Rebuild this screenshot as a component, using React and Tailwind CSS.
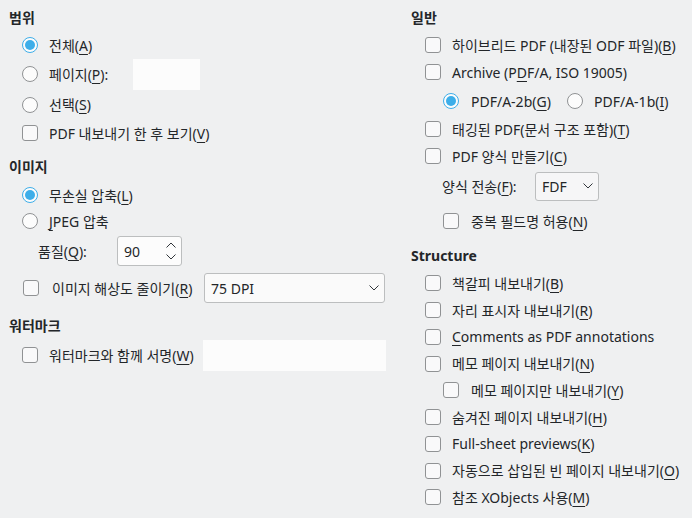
import React from 'react';

// mnemonic label: "&" marks the underlined letter
function Mn({ t }) {
    const i = t.indexOf('&');
    if (i < 0) return <>{t}</>;
    return (
        <>
            {t.slice(0, i)}
            <span className="underline decoration-1 underline-offset-[3px]">{t[i + 1]}</span>
            {t.slice(i + 2)}
        </>
    );
}

const Radio = ({ checked }) =>
    checked ? (
        <span className="w-4 h-4 shrink-0 rounded-full border border-[#3daee9] bg-[#fcfcfc] flex items-center justify-center">
            <span className="w-[10px] h-[10px] rounded-full bg-[#3daee9]" />
        </span>
    ) : (
        <span className="w-4 h-4 shrink-0 rounded-full border border-[#909294] bg-[#fcfcfc]" />
    );

const Check = () => <span className="w-4 h-4 shrink-0 rounded-[3px] border border-[#909294] bg-[#f9f9fa]" />;

const Header = ({ children, className = '' }) => (
    <div className={`h-[20px] flex items-center font-bold ${className}`}>{children}</div>
);

const ChevronDown = () => (
    <svg width="10" height="6" viewBox="0 0 10 6" className="shrink-0">
        <polyline points="0.5,0.5 5,5 9.5,0.5" fill="none" stroke="#31363b" strokeWidth="1" />
    </svg>
);

const SpinArrows = () => (
    <svg width="10" height="18" viewBox="0 0 10 18" className="shrink-0">
        <polyline points="0.5,5.5 5,1 9.5,5.5" fill="none" stroke="#31363b" strokeWidth="1" />
        <polyline points="0.5,12.5 5,17 9.5,12.5" fill="none" stroke="#31363b" strokeWidth="1" />
    </svg>
);

const structure = [
    ['책갈피 내보내기(&B)', false],
    ['자리 표시자 내보내기(&R)', false],
    ['&Comments as PDF annotations', false],
    ['메모 페이지 내보내기(&N)', false],
    ['메모 페이지만 내보내기(&Y)', true],
    ['숨겨진 페이지 내보내기(&H)', false],
    ['Full-sheet previews(&K)', false],
    ['자동으로 삽입된 빈 페이지 내보내기(&O)', false],
    ['참조 XObjects 사용(&M)', false],
];

export default function App() {
    return (
        <div className="w-[692px] h-[518px] bg-[#eff0f1] text-[#232629] text-[14px] font-['Noto_Sans','Noto_Sans_CJK_KR',sans-serif] flex overflow-hidden">
            {/* left column */}
            <div className="w-[401px] shrink-0 pt-[7px] flex flex-col">
                <Header className="pl-[9px]">범위</Header>
                <div className="mt-[4px] h-[28px] flex items-center pl-[22px] gap-[11px]">
                    <Radio checked />
                    <span><Mn t="전체(&A)" /></span>
                </div>
                <div className="h-[30px] flex items-center pl-[22px] gap-[11px]">
                    <Radio />
                    <span className="w-[84px] shrink-0"><Mn t="페이지(&P):" /></span>
                    <div className="w-[67px] h-[31px] bg-[#fcfcfc] -ml-[11px]" />
                </div>
                <div className="h-[31px] flex items-center pl-[22px] gap-[11px]">
                    <Radio />
                    <span><Mn t="선택(&S)" /></span>
                </div>
                <div className="h-[26px] flex items-center pl-[22px] gap-[11px]">
                    <Check />
                    <span><Mn t="PDF 내보내기 한 후 보기(&V)" /></span>
                </div>

                <Header className="pl-[9px] mt-[10px]">이미지</Header>
                <div className="mt-[5px] h-[28px] flex items-center pl-[22px] gap-[11px]">
                    <Radio checked />
                    <span><Mn t="무손실 압축(&L)" /></span>
                </div>
                <div className="h-[24px] flex items-center pl-[22px] gap-[11px]">
                    <Radio />
                    <span><Mn t="&JPEG 압축" /></span>
                </div>
                <div className="h-[36px] flex items-center pl-[38px]">
                    <span className="w-[79px] shrink-0"><Mn t="품질(&Q):" /></span>
                    <div className="w-[65px] h-[30px] rounded-[3px] border border-[#bcbebf] bg-[#fcfcfc] flex items-center pl-[6px] pr-[5px]">
                        <span className="flex-1">90</span>
                        <SpinArrows />
                    </div>
                </div>
                <div className="h-[38px] flex items-center pl-[23px]">
                    <Check />
                    <span className="w-[152px] shrink-0 ml-[13px]"><Mn t="이미지 해상도 줄이기(&R)" /></span>
                    <div className="w-[181px] h-[30px] rounded-[3px] border border-[#bcbebf] bg-[#fafafa] flex items-center pl-[6px] pr-[5px]">
                        <span className="flex-1">75 DPI</span>
                        <ChevronDown />
                    </div>
                </div>

                <Header className="pl-[9px] mt-[8px]">워터마크</Header>
                <div className="mt-[5px] h-[30px] flex items-center pl-[22px]">
                    <Check />
                    <span className="w-[154px] shrink-0 ml-[11px]"><Mn t="워터마크와 함께 서명(&W)" /></span>
                    <div className="w-[183px] h-[31px] bg-[#fcfcfc]" />
                </div>
            </div>

            {/* right column */}
            <div className="flex-1 pt-[7px] flex flex-col">
                <Header className="pl-[10px]">일반</Header>
                <div className="mt-[4px] h-[28px] flex items-center pl-[24px] gap-[11px]">
                    <Check />
                    <span><Mn t="하이브리드 PDF (내장된 ODF 파일)(&B)" /></span>
                </div>
                <div className="h-[26px] flex items-center pl-[24px] gap-[11px]">
                    <Check />
                    <span><Mn t="Archive (P&DF/A, ISO 19005)" /></span>
                </div>
                <div className="h-[32px] flex items-center pl-[42px]">
                    <Radio checked />
                    <span className="w-[96px] shrink-0 ml-[12px]"><Mn t="PDF/A-2b(&G)" /></span>
                    <Radio />
                    <span className="ml-[11px]"><Mn t="PDF/A-1b(&I)" /></span>
                </div>
                <div className="h-[24px] flex items-center pl-[24px] gap-[11px]">
                    <Check />
                    <span><Mn t="태깅된 PDF(문서 구조 포함)(&T)" /></span>
                </div>
                <div className="h-[30px] flex items-center pl-[24px] gap-[11px]">
                    <Check />
                    <span><Mn t="PDF 양식 만들기(&C)" /></span>
                </div>
                <div className="h-[30px] flex items-center pl-[41px]">
                    <span className="w-[93px] shrink-0"><Mn t="양식 전송(&F):" /></span>
                    <div className="w-[64px] h-[29px] rounded-[3px] border border-[#bcbebf] bg-[#f6f6f7] flex items-center pl-[6px] pr-[5px]">
                        <span className="flex-1">FDF</span>
                        <ChevronDown />
                    </div>
                </div>
                <div className="h-[40px] flex items-center pl-[42px] gap-[12px]">
                    <Check />
                    <span><Mn t="중복 필드명 허용(&N)" /></span>
                </div>

                <Header className="pl-[10px] mt-[4px]">Structure</Header>
                <div className="mt-[5px] flex flex-col">
                    {structure.map(([t, sub]) => (
                        <div
                            key={t}
                            className={`h-[26.75px] flex items-center ${sub ? 'pl-[42px] gap-[12px]' : 'pl-[24px] gap-[11px]'}`}
                        >
                            <Check />
                            <span><Mn t={t} /></span>
                        </div>
                    ))}
                </div>
            </div>
        </div>
    );
}
